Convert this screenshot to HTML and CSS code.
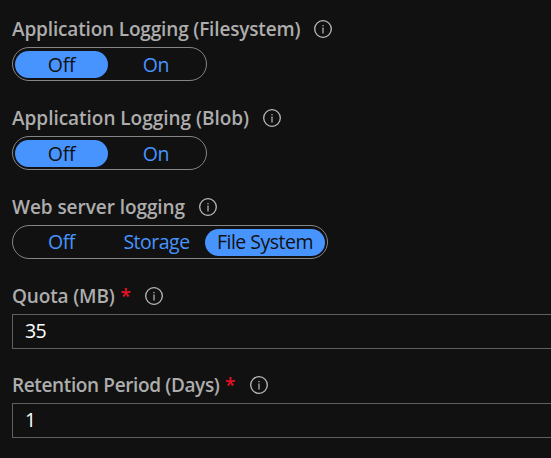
FILE: index.html
```
<!DOCTYPE html>
<html lang="en">
<head>
<meta charset="utf-8">
<title>App Service logs</title>
<link rel="stylesheet" href="styles.css">
</head>
<body>
<svg class="defs" width="0" height="0"><symbol id="info" viewBox="0 0 18 18"><circle cx="9" cy="9" r="8.3" fill="none" stroke="currentColor" stroke-width="1.3"/><path d="M9 7.5V13.5M9 5V6.3" stroke="currentColor" stroke-width="1.2"/></symbol></svg>
<main class="form">
<section class="field">
<div class="label"><span class="text l1">Application Logging (Filesystem)</span><svg class="info"><use href="#info"/></svg></div>
<div class="toggle two"><span class="option selected">Off</span><span class="option">On</span></div>
</section>
<section class="field">
<div class="label"><span class="text l2">Application Logging (Blob)</span><svg class="info"><use href="#info"/></svg></div>
<div class="toggle two"><span class="option selected">Off</span><span class="option">On</span></div>
</section>
<section class="field">
<div class="label"><span class="text l3">Web server logging</span><svg class="info"><use href="#info"/></svg></div>
<div class="toggle three"><span class="option">Off</span><span class="option">Storage</span><span class="option selected">File System</span></div>
</section>
<section class="field">
<div class="label"><span class="text l4">Quota (MB) <span class="required">*</span></span><svg class="info"><use href="#info"/></svg></div>
<div class="input">35</div>
</section>
<section class="field">
<div class="label"><span class="text l5">Retention Period (Days) <span class="required">*</span></span><svg class="info"><use href="#info"/></svg></div>
<div class="input">1</div>
</section>
</main>
</body>
</html>
```
FILE: styles.css
```
* { box-sizing: border-box; }
body { margin: 0; height: 458px; overflow: hidden; background: #111; color: #adadad; font-family: "Open Sans", "Noto Sans", sans-serif; font-size: 19px; }
.defs { position: absolute; }
.form { padding: 17px 0 0 12px; }
.field { height: 89px; }
.label { display: flex; align-items: center; height: 24px; font-weight: 600; white-space: nowrap; }
.text { flex: none; }
.l1 { width: 302px; letter-spacing: -.16px; }
.l2 { width: 251px; letter-spacing: -.03px; }
.l3 { width: 187px; letter-spacing: -.06px; }
.l4 { width: 133px; letter-spacing: -.15px; }
.l5 { width: 238px; letter-spacing: -.37px; }
.info { flex: none; width: 18px; height: 18px; color: #bcbcbc; }
.required { margin-left: 1px; color: #e81123; }
.toggle { display: grid; width: 195px; height: 34px; margin-top: 6px; padding: 3px 2px 2px; border: 1px solid #858585; border-radius: 17px; color: #4894fe; font-size: 19.5px; letter-spacing: -.3px; }
.toggle.two { grid-template-columns: 93px 1fr; line-height: 28px; }
.toggle.three { grid-template-columns: 93px 97px 120px; width: 316px; line-height: 26px; letter-spacing: -.5px; }
.option { height: 27px; border-radius: 14px; text-align: center; }
.selected { background: #4894fe; color: #111; }
.input { display: flex; align-items: center; width: 545px; height: 35px; margin-top: 6px; padding: 0 0 2px 12px; border: 1px solid #606060; color: #fff; font-size: 19.5px; letter-spacing: -.6px; }
```
